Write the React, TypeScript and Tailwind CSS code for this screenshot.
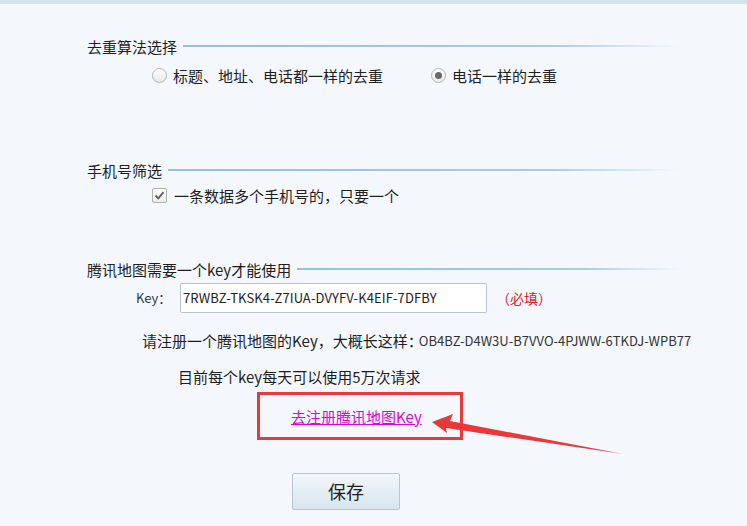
import React from "react";

const font = { fontFamily: '"Noto Sans CJK SC", "Noto Sans", sans-serif' };

function SectionTitle({ title }: { title: string }) {
  return (
    <div className="flex items-center h-[20px] w-[593px]">
      <span className="text-[15px] leading-none text-[#1e1e1e] whitespace-nowrap">{title}</span>
      <div className="ml-[6px] flex-1 h-[2px] bg-[linear-gradient(to_right,#93c0da_0%,#a8cde2_75%,rgba(200,225,240,0)_100%)]" />
    </div>
  );
}

function Radio({ checked, label }: { checked?: boolean; label: string }) {
  return (
    <label className="flex items-center">
      <span className="w-[15px] h-[15px] rounded-full border border-[#b4b4b4] bg-[linear-gradient(#ffffff,#e9e9e9)] flex items-center justify-center">
        {checked && <span className="w-[7px] h-[7px] rounded-full bg-[#6a6a6a]" />}
      </span>
      <span className="ml-[6px] text-[15px] leading-none text-[#1e1e1e] whitespace-nowrap">{label}</span>
    </label>
  );
}

export default function App() {
  return (
    <div className="w-[747px] h-[526px] bg-[#f4f8fd] overflow-hidden relative" style={font}>
      <div className="h-[4px] bg-[#d3e2f0]" />

      <div className="pl-[87px]">
        {/* 去重算法 */}
        <div className="mt-[32px]">
          <SectionTitle title="去重算法选择" />
        </div>
        <div className="mt-[9px] h-[20px] flex items-center pl-[65px]">
          <Radio label="标题、地址、电话都一样的去重" />
          <div className="ml-[48px]">
            <Radio checked label="电话一样的去重" />
          </div>
        </div>

        {/* 手机号 */}
        <div className="mt-[75px]">
          <SectionTitle title="手机号筛选" />
        </div>
        <div className="mt-[5px] h-[20px] flex items-center pl-[65px]">
          <span className="w-[15px] h-[15px] border border-[#b0b0b0] rounded-[2px] bg-[linear-gradient(#ffffff,#ececec)] flex items-center justify-center">
            <svg width="11" height="11" viewBox="0 0 11 11">
              <path d="M1.5 5.5 L4.3 8.3 L9.5 2.2" fill="none" stroke="#5e5e5e" strokeWidth="1.8" />
            </svg>
          </span>
          <span className="ml-[7px] text-[15px] leading-none text-[#1e1e1e] whitespace-nowrap">
            一条数据多个手机号的，只要一个
          </span>
        </div>

        {/* 腾讯地图 key */}
        <div className="mt-[54px]">
          <SectionTitle title="腾讯地图需要一个key才能使用" />
        </div>
        <div className="mt-[4px] h-[30px] flex items-center pl-[49px]">
          <span className="w-[44px] text-[13px] text-[#333]">Key：</span>
          <div className="w-[307px] h-[30px] bg-white border border-[#b8c4cf] rounded-[2px] flex items-center pl-[2px] text-[13px] text-[#222] tracking-[0.1px]">
            7RWBZ-TKSK4-Z7IUA-DVYFV-K4EIF-7DFBY
          </div>
          <span className="ml-[9px] text-[14px] text-[#e4231f]">（必填）</span>
        </div>

        <div className="mt-[17px] h-[20px] flex items-center pl-[55px] whitespace-nowrap">
          <span className="text-[15px] leading-none text-[#1e1e1e]">请注册一个腾讯地图的Key，大概长这样：</span>
          <span className="-ml-[4px] text-[13px] leading-none text-[#333]">OB4BZ-D4W3U-B7VVO-4PJWW-6TKDJ-WPB77</span>
        </div>

        <div className="mt-[16px] h-[20px] flex items-center pl-[91px] text-[15px] leading-none text-[#1e1e1e]">
          目前每个key每天可以使用5万次请求
        </div>

        <div className="mt-[6px] ml-[170px] w-[206px] h-[48px] border-[3px] border-[#e53a3a] flex items-center pl-[31px]">
          <a href="#" className="text-[15px] leading-none text-[#e000e0] underline whitespace-nowrap">
            去注册腾讯地图Key
          </a>
        </div>

        <button className="mt-[33px] ml-[205px] w-[108px] h-[37px] border border-[#b7c5d2] rounded-[2px] bg-[linear-gradient(#f2f7fb,#d8e5ef)] text-[18px] text-[#1e1e1e] flex items-center justify-center">
          保存
        </button>
      </div>

      {/* annotation arrow */}
      <svg className="absolute left-0 top-0 pointer-events-none" width="747" height="526">
        <polygon
          points="432,422 453,414 450,421 623,454 446,428 447,433"
          fill="#e8383a"
        />
      </svg>
    </div>
  );
}
